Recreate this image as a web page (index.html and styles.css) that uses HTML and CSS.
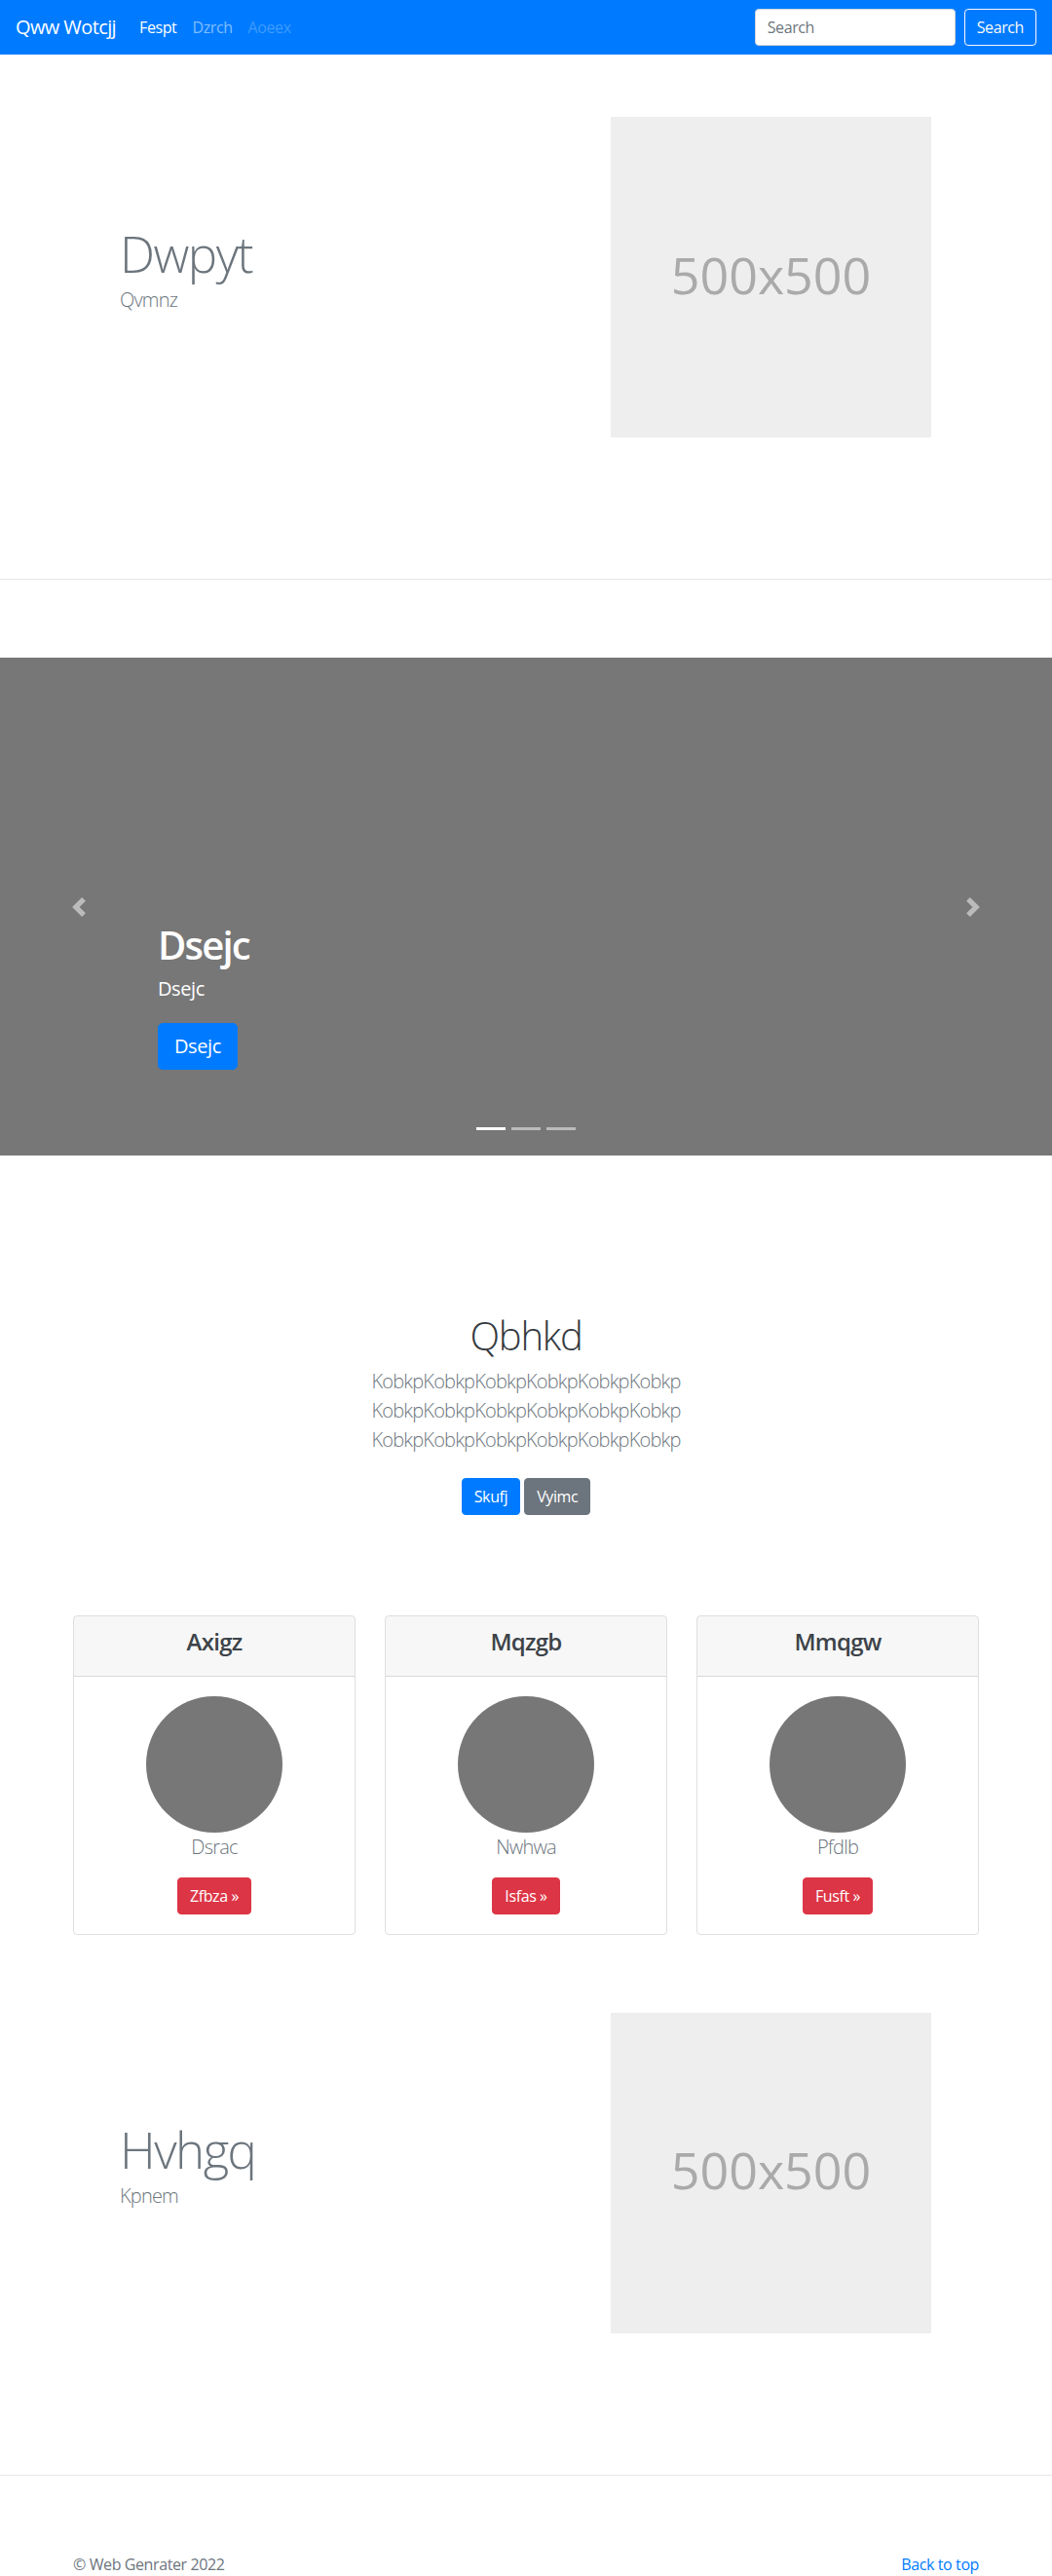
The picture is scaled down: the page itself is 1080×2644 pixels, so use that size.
FILE: index.html
```html
<!DOCTYPE html>
<html lang="en">
<head>
<meta charset="utf-8">
<title>Qww Wotcjj</title>
<link rel="stylesheet" href="styles.css">
</head>
<body>
<nav class="navbar">
  <a class="brand" href="#">Qww Wotcjj</a>
  <ul class="nav">
    <li><a class="nav-link active" href="#">Fespt</a></li>
    <li><a class="nav-link" href="#">Dzrch</a></li>
    <li><a class="nav-link disabled" href="#">Aoeex</a></li>
  </ul>
  <form class="search">
    <input class="search-input" type="text" placeholder="Search">
    <button class="btn btn-outline-light" type="button">Search</button>
  </form>
</nav>

<main>
  <section class="hero">
    <div class="hero-row">
      <div class="hero-text">
        <h1 class="display">Dwpyt</h1>
        <p class="lead">Qvmnz</p>
      </div>
      <div class="hero-media">
        <div class="placeholder">500x500</div>
      </div>
    </div>
  </section>

  <section class="carousel">
    <div class="carousel-caption">
      <h1 class="caption-title">Dsejc</h1>
      <p class="caption-text">Dsejc</p>
      <a class="btn btn-primary btn-lg" href="#">Dsejc</a>
    </div>
    <a class="carousel-control prev" href="#">
      <svg class="control-icon" viewBox="0 0 8 8" width="20" height="20"><path d="M5.25 0l-4 4 4 4 1.5-1.5L4.25 4l2.5-2.5L5.25 0z"/></svg>
    </a>
    <a class="carousel-control next" href="#">
      <svg class="control-icon" viewBox="0 0 8 8" width="20" height="20"><path d="M2.75 0l-1.5 1.5L3.75 4l-2.5 2.5L2.75 8l4-4-4-4z"/></svg>
    </a>
    <ol class="indicators">
      <li class="active"></li>
      <li></li>
      <li></li>
    </ol>
  </section>

  <section class="intro">
    <h1 class="intro-title">Qbhkd</h1>
    <p class="intro-lead">KobkpKobkpKobkpKobkpKobkpKobkp<br>KobkpKobkpKobkpKobkpKobkpKobkp<br>KobkpKobkpKobkpKobkpKobkpKobkp</p>
    <div class="intro-actions">
      <a class="btn btn-primary" href="#">Skufj</a>
      <a class="btn btn-secondary" href="#">Vyimc</a>
    </div>
  </section>

  <section class="cards">
    <div class="card">
      <div class="card-header"><h4 class="card-title">Axigz</h4></div>
      <div class="card-body">
        <div class="avatar"></div>
        <p class="card-text">Dsrac</p>
        <a class="btn btn-danger" href="#">Zfbza &raquo;</a>
      </div>
    </div>
    <div class="card">
      <div class="card-header"><h4 class="card-title">Mqzgb</h4></div>
      <div class="card-body">
        <div class="avatar"></div>
        <p class="card-text">Nwhwa</p>
        <a class="btn btn-danger" href="#">Isfas &raquo;</a>
      </div>
    </div>
    <div class="card">
      <div class="card-header"><h4 class="card-title">Mmqgw</h4></div>
      <div class="card-body">
        <div class="avatar"></div>
        <p class="card-text">Pfdlb</p>
        <a class="btn btn-danger" href="#">Fusft &raquo;</a>
      </div>
    </div>
  </section>

  <section class="hero">
    <div class="hero-row">
      <div class="hero-text">
        <h1 class="display">Hvhgq</h1>
        <p class="lead">Kpnem</p>
      </div>
      <div class="hero-media">
        <div class="placeholder">500x500</div>
      </div>
    </div>
  </section>
</main>

<footer class="footer">
  <p class="copyright">&copy; Web Genrater 2022</p>
  <a class="back-top" href="#">Back to top</a>
</footer>
</body>
</html>
```

FILE: styles.css
```css
* { box-sizing: border-box; }

body {
  margin: 0;
  font-family: "Open Sans", "Noto Sans", "Liberation Sans", sans-serif;
  font-size: 16px;
  line-height: 1.5;
  letter-spacing: -0.025em;
  color: #212529;
  background: #fff;
}

a { text-decoration: none; }

/* Navbar */
.navbar {
  display: flex;
  align-items: center;
  height: 56px;
  padding: 8px 16px;
  background: #007bff;
}
.brand {
  color: #fff;
  font-size: 20px;
  line-height: 30px;
  letter-spacing: -0.03em;
  padding: 5px 0;
  margin-right: 16px;
}
.nav {
  display: flex;
  list-style: none;
  margin: 0;
  padding: 0;
}
.nav-link {
  display: block;
  padding: 8px;
  color: rgba(255, 255, 255, .5);
}
.nav-link.active { color: #fff; }
.nav-link.disabled { color: rgba(255, 255, 255, .25); }

.search {
  margin-left: auto;
  display: flex;
  align-items: center;
}
.search-input {
  width: 206px;
  height: 38px;
  padding: 6px 12px;
  font-family: inherit;
  letter-spacing: inherit;
  font-size: 16px;
  color: #495057;
  border: 1px solid #ced4da;
  border-radius: 4px;
  margin-right: 9px;
  background: #fff;
}
.search-input::placeholder { color: #6c757d; }

/* Buttons */
.btn {
  display: inline-block;
  font-family: inherit;
  letter-spacing: inherit;
  font-size: 16px;
  line-height: 24px;
  padding: 6px 12px;
  border: 1px solid transparent;
  border-radius: 4px;
  color: #fff;
  text-align: center;
}
.btn-outline-light {
  background: transparent;
  border-color: #f8f9fa;
  color: #f8f9fa;
}
.btn-primary { background: #007bff; border-color: #007bff; }
.btn-secondary { background: #6c757d; border-color: #6c757d; }
.btn-danger { background: #dc3545; border-color: #dc3545; }
.btn-lg {
  font-size: 20px;
  line-height: 30px;
  padding: 8px 16px;
  border-radius: 5px;
}

/* Hero */
.hero {
  padding: 64px 0 145px;
  border-bottom: 1px solid #e6e6e6;
}
.hero-row {
  width: 960px;
  margin: 0 auto;
  display: flex;
  align-items: center;
}
.hero-text {
  flex: 1;
  padding-left: 63px;
}
.hero-media {
  flex: 1;
  display: flex;
  justify-content: flex-end;
  padding-right: 64px;
}
.display {
  font-size: 51px;
  font-weight: 300;
  line-height: 1.2;
  letter-spacing: -0.03em;
  color: #6c757d;
  margin: 0 0 2px;
}
.lead {
  font-size: 20px;
  font-weight: 300;
  line-height: 30px;
  letter-spacing: -0.04em;
  color: #6c757d;
  margin: 0 0 16px;
}
.placeholder {
  width: 329px;
  height: 329px;
  padding-bottom: 6px;
  background: #eee;
  color: #aaa;
  font-size: 52px;
  letter-spacing: 0;
  display: flex;
  align-items: center;
  justify-content: center;
}

/* Carousel */
.carousel {
  position: relative;
  height: 511px;
  margin-top: 80px;
  background: #777;
  overflow: hidden;
}
.carousel-caption {
  position: absolute;
  left: 15%;
  right: 15%;
  bottom: 88px;
  color: #fff;
}
.caption-title {
  font-size: 40px;
  font-weight: 600;
  line-height: 48px;
  letter-spacing: -0.045em;
  margin: 0 0 6px;
}
.caption-text {
  font-size: 20px;
  line-height: 30px;
  margin: 0 0 20px;
}
.carousel-control {
  position: absolute;
  top: 0;
  bottom: 0;
  width: 15%;
  display: flex;
  align-items: center;
  justify-content: center;
  opacity: .5;
}
.carousel-control.prev { left: 0; }
.carousel-control.next { right: 0; }
.control-icon { fill: #fff; display: block; }

.indicators {
  position: absolute;
  left: 0;
  right: 0;
  bottom: 16px;
  display: flex;
  justify-content: center;
  margin: 0 15%;
  padding: 0;
  list-style: none;
}
.indicators li {
  box-sizing: content-box;
  width: 30px;
  height: 3px;
  margin: 0 3px;
  background: #fff;
  background-clip: padding-box;
  border-top: 10px solid transparent;
  border-bottom: 10px solid transparent;
  opacity: .5;
}
.indicators li.active { opacity: 1; }

/* Intro */
.intro {
  padding-top: 161px;
  text-align: center;
}
.intro-title {
  font-size: 40px;
  font-weight: 300;
  line-height: 48px;
  letter-spacing: -0.03em;
  color: #343a40;
  margin: 0 0 8px;
}
.intro-lead {
  font-size: 20px;
  font-weight: 300;
  line-height: 30px;
  letter-spacing: -0.04em;
  color: #6c757d;
  margin: 0 0 24px;
}
.intro-actions {
  display: flex;
  justify-content: center;
  gap: 4px;
}

/* Cards */
.cards {
  width: 930px;
  margin: 103px auto 0;
  padding-bottom: 16px;
  display: grid;
  grid-template-columns: repeat(3, 1fr);
  gap: 30px;
}
.card {
  border: 1px solid rgba(0, 0, 0, .125);
  border-radius: 4px;
  overflow: hidden;
}
.card-header {
  background: rgba(0, 0, 0, .03);
  border-bottom: 1px solid rgba(0, 0, 0, .125);
  padding: 12px 20px;
  text-align: center;
}
.card-title {
  font-size: 24px;
  font-weight: 600;
  line-height: 1.2;
  letter-spacing: -0.03em;
  color: #3d4349;
  margin: 0 0 8px;
}
.card-body {
  padding: 20px;
  text-align: center;
}
.avatar {
  width: 140px;
  height: 140px;
  border-radius: 50%;
  background: #777;
  margin: 0 auto;
}
.card-text {
  font-size: 20px;
  font-weight: 300;
  line-height: 30px;
  letter-spacing: -0.04em;
  color: #6c757d;
  margin: 0 0 16px;
}

/* Footer */
.footer {
  width: 930px;
  margin: 0 auto;
  padding-top: 79px;
  display: flex;
  justify-content: space-between;
  color: #6c757d;
}
.copyright { margin: 0; }
.back-top { color: #007bff; }
```
